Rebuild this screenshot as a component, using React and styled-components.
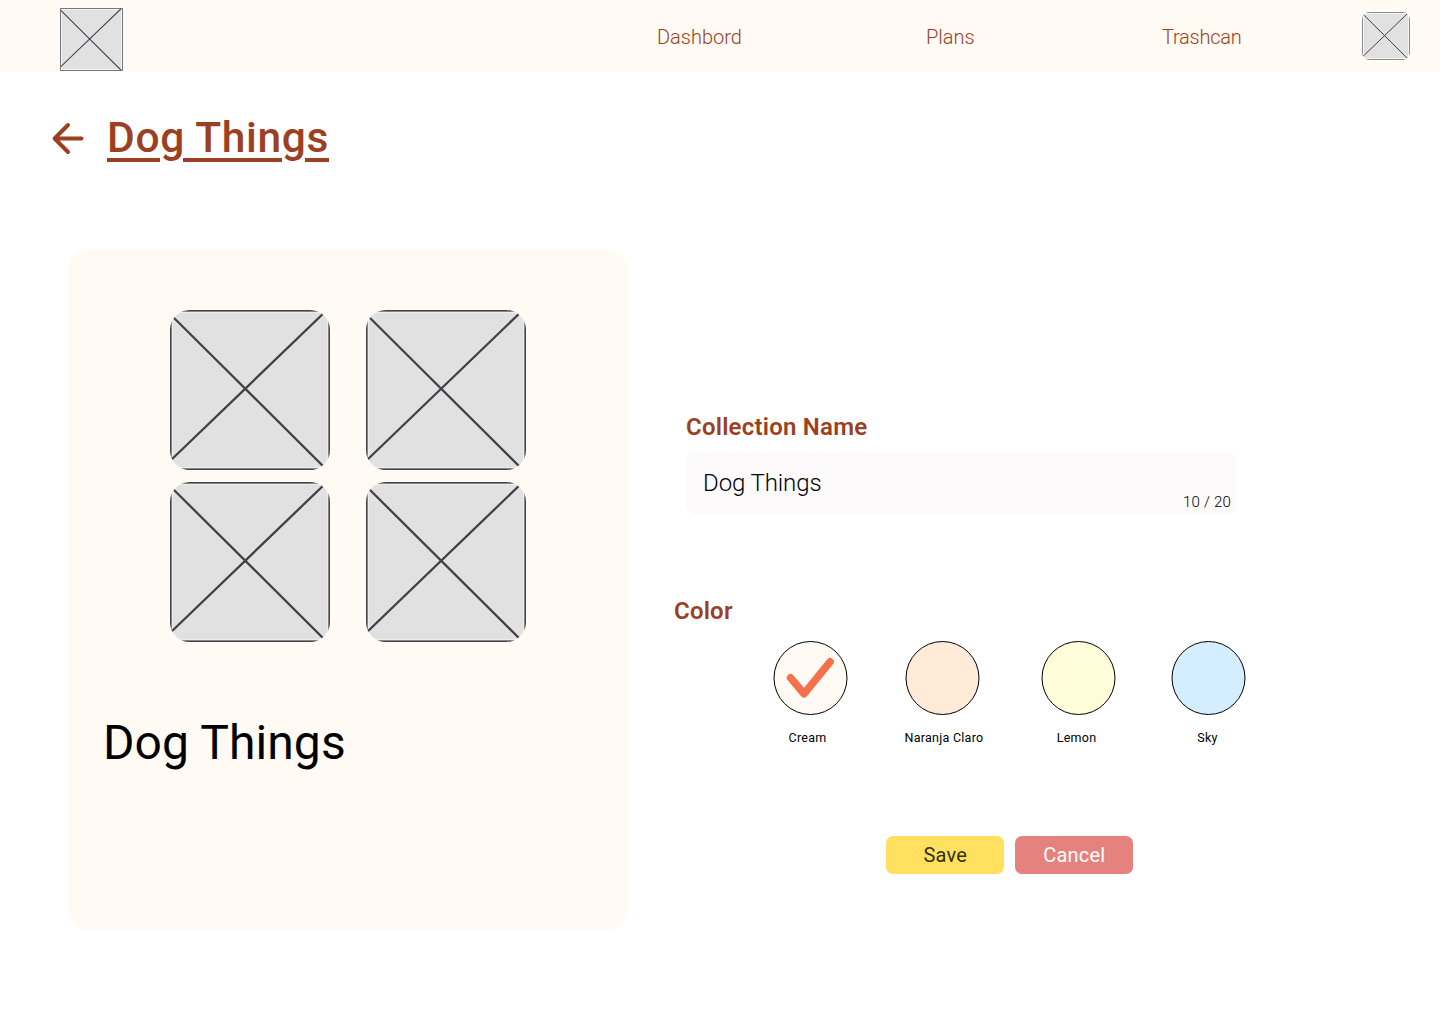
import React, { useState } from 'react';
import styled, { createGlobalStyle } from 'styled-components';

const GlobalStyle = createGlobalStyle`
  * { box-sizing: border-box; }
  body { margin: 0; background: #ffffff; font-family: Roboto, "Noto Sans", sans-serif; }
`;

const Page = styled.div`
  width: 1440px;
  height: 1024px;
  overflow: hidden;
  background: #ffffff;
`;

const Header = styled.header`
  height: 72px;
  padding: 0 30px 0 60px;
  display: flex;
  align-items: center;
  background: #fffaf3;
`;

const Logo = styled.div`
  display: flex;
  width: 63px;
  height: 63px;
  margin-top: 7px;
`;

const Nav = styled.nav`
  flex: 1;
  display: flex;
  justify-content: flex-end;
  padding: 2px 121px 0 0;
`;

const NavLink = styled.a`
  font-size: 20px;
  line-height: 24px;
  font-weight: 300;
  color: #9c3f22;
  white-space: nowrap;
  letter-spacing: ${(p) => p.$spacing}px;
  width: ${(p) => p.$width}px;
`;

const Avatar = styled.div`
  display: flex;
  width: 48px;
  height: 48px;
`;

const TitleBar = styled.div`
  display: flex;
  align-items: center;
  gap: 22px;
  height: 56px;
  margin: 38px 0 0 51px;
`;

const Title = styled.h1`
  margin: 0;
  font-size: 42.5px;
  line-height: 56px;
  font-weight: 500;
  letter-spacing: 0.65px;
  color: #9c3f22;
  text-decoration: underline;
  text-decoration-thickness: 4px;
  text-underline-offset: 6px;
`;

const Main = styled.main`
  display: flex;
  align-items: flex-start;
  margin-top: 84px;
  padding-left: 68px;
`;

const PreviewCard = styled.section`
  width: 560px;
  height: 680px;
  padding: 60px 34px 0;
  border-radius: 20px;
  background: #fffaf3;
`;

const Gallery = styled.div`
  display: grid;
  grid-template-columns: 160px 160px;
  grid-auto-rows: 160px;
  gap: 12px 36px;
  justify-content: center;
`;

const PreviewName = styled.h2`
  margin: 71px 0 0 1px;
  font-size: 48px;
  line-height: 60px;
  font-weight: 400;
  letter-spacing: 0.1px;
  color: #000000;
`;

const Editor = styled.form`
  width: 600px;
  margin-left: 46px;
  padding-top: 162px;
`;

const FieldLabel = styled.label`
  display: block;
  font-size: 24px;
  line-height: 30px;
  font-weight: 600;
  letter-spacing: ${(p) => p.$spacing}px;
  color: #9c3f22;
`;

const NameField = styled.div`
  margin-left: 12px;
  width: 550px;
`;

const InputBox = styled.div`
  display: flex;
  align-items: flex-end;
  height: 62px;
  margin-top: 10px;
  padding: 0 5px 3px 17px;
  border-radius: 8px;
  background: #fcfafb;
`;

const NameInput = styled.input`
  flex: 1;
  min-width: 0;
  height: 30px;
  margin-bottom: 13px;
  padding: 0;
  border: 0;
  outline: none;
  background: transparent;
  font: 300 24px/30px Roboto, "Noto Sans", sans-serif;
  letter-spacing: -0.1px;
  color: #000000;
`;

const Counter = styled.span`
  font-size: 15px;
  line-height: 18px;
  font-weight: 300;
  letter-spacing: 0.2px;
  color: #000000;
`;

const ColorField = styled.div`
  margin-top: 82px;
`;

const Swatches = styled.div`
  display: grid;
  grid-template-columns: 132px 136px 130px 75px;
  margin: 15px 0 0 99px;
`;

const Swatch = styled.div`
  display: flex;
  flex-direction: column;
  align-items: center;
  width: 75px;
`;

const SwatchName = styled.span`
  margin-top: 15px;
  margin-left: ${(p) => p.$shift}px;
  font-size: 12.5px;
  line-height: 16px;
  letter-spacing: 0.25px;
  white-space: nowrap;
  color: #000000;
`;

const Actions = styled.div`
  display: flex;
  gap: 11.5px;
  margin: 90px 0 0 212px;
`;

const Button = styled.button`
  width: 117.5px;
  height: 38px;
  padding: 1px 0 0 1px;
  border: 0;
  border-radius: 7px;
  font: 400 20px/37px Roboto, "Noto Sans", sans-serif;
  letter-spacing: ${(p) => p.$spacing}px;
  background: ${(p) => p.$bg};
  color: ${(p) => p.$fg};
`;

function ImagePlaceholder({ size, radius, stroke, edge, edgeColor }) {
  const k = size / 160;
  const id = `clip-${size}`;
  return (
    <svg width={size} height={size} viewBox={`0 0 ${size} ${size}`} aria-hidden="true">
      <clipPath id={id}>
        <rect width={size} height={size} rx={radius} />
      </clipPath>
      <g clipPath={`url(#${id})`} fill="none">
        <rect width={size} height={size} fill="#e1e1e1" />
        <rect x={edge + 0.5} y={edge + 0.5} width={size - 2 * edge - 1} height={size - 2 * edge - 1} stroke="#f4f4f4" />
        <path
          d={`M0 ${4 * k}L${157 * k} ${160 * k}M0 ${151 * k}L${157 * k} 0`}
          stroke="#414146"
          strokeWidth={stroke}
        />
        <rect x={edge / 2} y={edge / 2} width={size - edge} height={size - edge} stroke={edgeColor} strokeWidth={edge} />
      </g>
    </svg>
  );
}

const BackArrow = () => (
  <svg width="34" height="34" viewBox="0 0 34 34" fill="none" stroke="#9c3f22" strokeWidth="4" strokeLinecap="round" strokeLinejoin="round">
    <path d="M30.5 17.5H4M17 4L3.6 17.5L17 31" />
  </svg>
);

const ColorDot = ({ color, checked }) => (
  <svg width="75" height="74" viewBox="0 0 75 74" fill="none">
    <circle cx="37.5" cy="37" r="36.5" fill={color} stroke="#000000" />
    {checked && (
      <path
        d="M17.6 36.9L31 52.8L57 20.8"
        stroke="#f4714b"
        strokeWidth="7.6"
        strokeLinecap="round"
        strokeLinejoin="round"
      />
    )}
  </svg>
);

const colors = [
  { name: 'Cream', color: '#fffaf3', shift: -6 },
  { name: 'Naranja Claro', color: '#ffebd7', shift: 3 },
  { name: 'Lemon', color: '#fffcd9', shift: -4 },
  { name: 'Sky', color: '#d4eeff', shift: -2 },
];

export default function App() {
  const [name, setName] = useState('Dog Things');
  const [selected, setSelected] = useState('Cream');
  return (
    <Page>
      <GlobalStyle />
      <Header>
        <Logo>
          <ImagePlaceholder size={63} radius={0} stroke={1.1} edge={1} edgeColor="#77777c" />
        </Logo>
        <Nav>
          <NavLink $width={269} $spacing={0}>Dashbord</NavLink>
          <NavLink $width={236} $spacing={0}>Plans</NavLink>
          <NavLink $width={79} $spacing={-0.25}>Trashcan</NavLink>
        </Nav>
        <Avatar>
          <ImagePlaceholder size={48} radius={8} stroke={1} edge={1} edgeColor="#8b8b90" />
        </Avatar>
      </Header>
      <TitleBar>
        <BackArrow />
        <Title>Dog Things</Title>
      </TitleBar>
      <Main>
        <PreviewCard>
          <Gallery>
            {[0, 1, 2, 3].map((i) => (
              <ImagePlaceholder key={i} size={160} radius={20} stroke={2.3} edge={1.6} edgeColor="#414146" />
            ))}
          </Gallery>
          <PreviewName>{name}</PreviewName>
        </PreviewCard>
        <Editor onSubmit={(e) => e.preventDefault()}>
          <NameField>
            <FieldLabel htmlFor="name" $spacing={0.22}>Collection Name</FieldLabel>
            <InputBox>
              <NameInput id="name" maxLength={20} value={name} onChange={(e) => setName(e.target.value)} />
              <Counter>{name.length} / 20</Counter>
            </InputBox>
          </NameField>
          <ColorField>
            <FieldLabel as="div" $spacing={0.2}>Color</FieldLabel>
            <Swatches>
              {colors.map((c) => (
                <Swatch key={c.name} onClick={() => setSelected(c.name)}>
                  <ColorDot color={c.color} checked={selected === c.name} />
                  <SwatchName $shift={c.shift}>{c.name}</SwatchName>
                </Swatch>
              ))}
            </Swatches>
          </ColorField>
          <Actions>
            <Button type="submit" $bg="#ffe15f" $fg="#333008" $spacing={0.2}>Save</Button>
            <Button type="button" $bg="#e5827d" $fg="#ffffff" $spacing={0.2}>Cancel</Button>
          </Actions>
        </Editor>
      </Main>
    </Page>
  );
}
